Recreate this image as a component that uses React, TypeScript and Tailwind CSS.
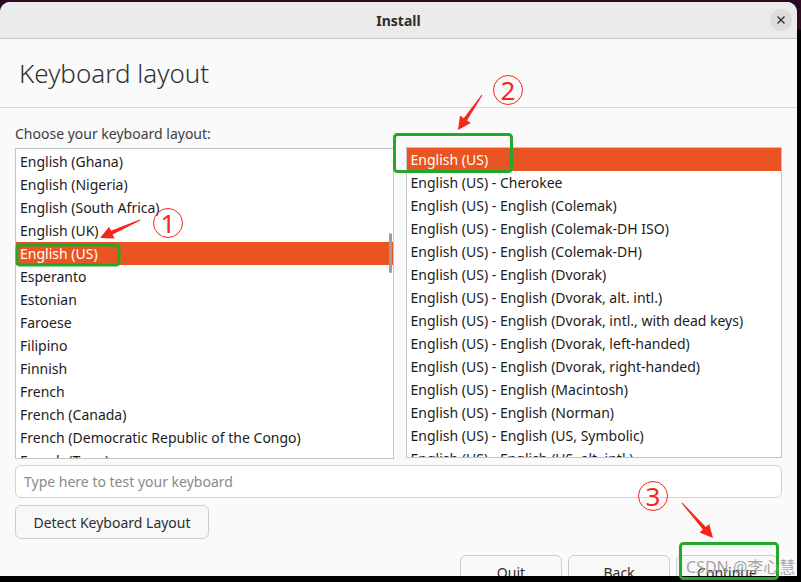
import React from 'react';

const LEFT_ITEMS = [
  'English (Ghana)',
  'English (Nigeria)',
  'English (South Africa)',
  'English (UK)',
  'English (US)',
  'Esperanto',
  'Estonian',
  'Faroese',
  'Filipino',
  'Finnish',
  'French',
  'French (Canada)',
  'French (Democratic Republic of the Congo)',
  'French (Togo)',
];

const RIGHT_ITEMS = [
  'English (US)',
  'English (US) - Cherokee',
  'English (US) - English (Colemak)',
  'English (US) - English (Colemak-DH ISO)',
  'English (US) - English (Colemak-DH)',
  'English (US) - English (Dvorak)',
  'English (US) - English (Dvorak, alt. intl.)',
  'English (US) - English (Dvorak, intl., with dead keys)',
  'English (US) - English (Dvorak, left-handed)',
  'English (US) - English (Dvorak, right-handed)',
  'English (US) - English (Macintosh)',
  'English (US) - English (Norman)',
  'English (US) - English (US, Symbolic)',
  'English (US) - English (US, alt. intl.)',
];

// tapering arrow polygon from tail to tip
const arrow = (x1: number, y1: number, x2: number, y2: number) => {
  const dx = x2 - x1;
  const dy = y2 - y1;
  const len = Math.hypot(dx, dy);
  const ux = dx / len;
  const uy = dy / len;
  const nx = -uy;
  const ny = ux;
  const head = 13;
  const hw = 6.5;
  const bx = x2 - ux * head;
  const by = y2 - uy * head;
  const pts = [
    [x1 + nx * 0.5, y1 + ny * 0.5],
    [bx + nx * 2, by + ny * 2],
    [bx + nx * hw, by + ny * hw],
    [x2, y2],
    [bx - nx * hw, by - ny * hw],
    [bx - nx * 2, by - ny * 2],
    [x1 - nx * 0.5, y1 - ny * 0.5],
  ];
  return pts.map((p) => p.join(',')).join(' ');
};

const ListBox: React.FC<{ items: string[]; selected: number; scrollbar?: boolean }> = ({ items, selected, scrollbar }) => (
  <div className="relative h-[311px] flex-1 overflow-hidden border border-[#c4c4c4] bg-white">
    <div className={scrollbar ? 'pt-[1px]' : ''}>
      {items.map((item, i) => (
        <div
          key={item}
          className={
            'h-[23px] px-[4px] text-[14px] leading-[23px] whitespace-nowrap ' +
            (i === selected ? 'bg-[#e95420] text-white' : 'text-[#1c1c1c]')
          }
        >
          {item}
        </div>
      ))}
    </div>
    {scrollbar && <div className="absolute right-[1px] top-[84px] h-[40px] w-[3px] rounded-full bg-[#9c9c9c]" />}
  </div>
);

export default function App() {
  return (
    <div
      className="relative h-[582px] w-[801px] overflow-hidden bg-[linear-gradient(#2c0a22_0px,#2c0a22_30px,#000_30px)]"
      style={{ fontFamily: '"Noto Sans", "Noto Sans CJK SC", sans-serif' }}
    >
      <div className="mt-[2px] flex h-[574px] w-[797px] flex-col overflow-hidden rounded-t-[10px] bg-[#fafafa]">
        {/* title bar */}
        <div className="relative flex h-[37px] shrink-0 items-center justify-center border-b border-[#c6c6c6] bg-[#ebebeb]">
          <span className="text-[14px] font-bold text-[#2e2e2e]">Install</span>
          <div className="absolute right-[5px] top-[7px] flex h-[22px] w-[22px] items-center justify-center rounded-full bg-[#dcdcdc]">
            <svg width="10" height="10" viewBox="0 0 10 10">
              <path d="M1.5 1.5 L8.5 8.5 M8.5 1.5 L1.5 8.5" stroke="#333" strokeWidth="1.4" />
            </svg>
          </div>
        </div>

        {/* heading */}
        <div className="flex h-[69px] shrink-0 items-center border-b border-[#dadada] pl-[19px]">
          <h1 className="text-[26px] font-light text-[#333]">Keyboard layout</h1>
        </div>

        {/* body */}
        <div className="flex flex-1 flex-col px-[15px] pt-[16px]">
          <div className="text-[14px] leading-[20px] text-[#3d3d3d]">Choose your keyboard layout:</div>
          <div className="mt-[4px] flex gap-[12px]">
            <ListBox items={LEFT_ITEMS} selected={4} scrollbar />
            <div className="-mt-[1px] flex flex-1">
              <ListBox items={RIGHT_ITEMS} selected={0} />
            </div>
          </div>
          <div className="mt-[6px] flex h-[33px] items-center rounded-[6px] border border-[#d2d2d2] bg-white px-[8px] text-[14px] text-[#8a8a8a]">
            Type here to test your keyboard
          </div>
          <div className="mt-[7px] flex">
            <button className="h-[34px] w-[194px] rounded-[6px] border border-[#cdcdcd] bg-[#f8f8f8] text-[14px] text-[#2e2e2e]">
              Detect Keyboard Layout
            </button>
          </div>
          <div className="mt-[16px] flex justify-end gap-[6px] pr-[4px]">
            {['Quit', 'Back', 'Continue'].map((b) => (
              <button
                key={b}
                className="h-[34px] w-[102px] rounded-[6px] border border-[#cdcdcd] bg-[#f8f8f8] text-[14px] text-[#2e2e2e]"
              >
                {b}
              </button>
            ))}
          </div>
        </div>
      </div>

      {/* annotations */}
      <svg className="pointer-events-none absolute left-0 top-0" width="801" height="582">
        <polygon points={arrow(140, 220, 100, 238)} fill="#f5261a" />
        <polygon points={arrow(482, 95, 458, 130)} fill="#f5261a" />
        <polygon points={arrow(682, 503, 713, 538)} fill="#f5261a" />
        <rect x="17" y="245" width="102" height="20" rx="3" fill="none" stroke="#25a82a" strokeWidth="3" />
        <rect x="394.5" y="134.5" width="117" height="37" rx="3" fill="none" stroke="#25a82a" strokeWidth="3" />
        <rect x="680.5" y="543.5" width="97" height="35" rx="3" fill="none" stroke="#25a82a" strokeWidth="3" />
      </svg>
      {[
        { n: '1', c: 'left-[153px] top-[208px]' },
        { n: '2', c: 'left-[493px] top-[75px]' },
        { n: '3', c: 'left-[638px] top-[481px]' },
      ].map((m) => (
        <div
          key={m.n}
          className={'absolute flex h-[30px] w-[30px] items-center justify-center rounded-full border-[1.5px] border-[#f5261a] text-[26px] leading-none text-[#f5261a] ' + m.c}
        >
          {m.n}
        </div>
      ))}
      <div className="absolute left-[686px] top-[555px] text-[16px] text-[#9a9a9a]/90">CSDN @李心慧</div>
    </div>
  );
}
